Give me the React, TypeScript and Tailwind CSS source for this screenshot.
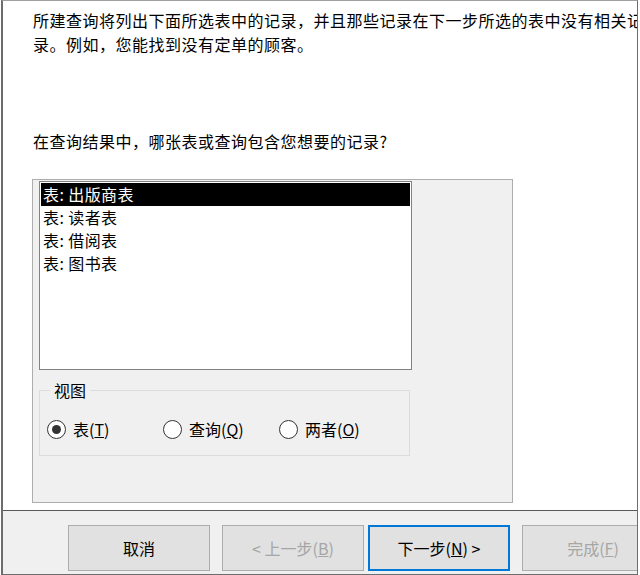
import React from 'react';

const font = { fontFamily: '"Noto Sans CJK SC", "Microsoft YaHei", sans-serif' };

const tables = ['表: 出版商表', '表: 读者表', '表: 借阅表', '表: 图书表'];

function Radio({ checked, label, mnemonic }: { checked?: boolean; label: string; mnemonic: string }) {
  return (
    <div className="flex w-[116px] items-center">
      <span className="flex h-[19px] w-[19px] items-center justify-center rounded-full border border-[#333333] bg-white">
        {checked && <span className="h-[9px] w-[9px] rounded-full bg-[#333333]" />}
      </span>
      <span className="ml-[7px] text-[16px] leading-[20px] text-black">
        {label}(<u>{mnemonic}</u>)
      </span>
    </div>
  );
}

function Button({
  children,
  disabled,
  focused,
}: {
  children: React.ReactNode;
  disabled?: boolean;
  focused?: boolean;
}) {
  return (
    <div
      className={
        'flex h-[46px] w-[142px] shrink-0 items-center justify-center bg-[#e1e1e1] text-[16px] ' +
        (focused ? 'border-2 border-[#0078d7] ' : 'border border-[#adadad] ') +
        (disabled ? 'text-[#a6a6a6]' : 'text-black')
      }
    >
      {children}
    </div>
  );
}

export default function App() {
  return (
    <div className="h-[575px] w-[640px] overflow-hidden bg-white" style={font}>
      <div className="ml-px flex h-[575px] w-[637px] flex-col border-t border-l-2 border-r border-b border-[#6d6d6d] border-t-[#a0a0a0]">
        {/* Upper page */}
        <div className="h-[509px] shrink-0 overflow-hidden bg-white pl-[30px] pt-[7px]">
          <div className="whitespace-nowrap text-[16px] leading-[24px] tracking-[0.5px] text-black">
            <div>所建查询将列出下面所选表中的记录，并且那些记录在下一步所选的表中没有相关记</div>
            <div>录。例如，您能找到没有定单的顾客。</div>
          </div>
          <div className="mt-[73px] text-[16px] leading-[24px] tracking-[0.5px] text-black">
            在查询结果中，哪张表或查询包含您想要的记录?
          </div>

          <div className="ml-[-1px] mt-[26px] h-[324px] w-[481px] border border-[#adadad] bg-[#f0f0f0] pl-[6px] pt-[1px]">
            <div className="h-[189px] w-[373px] border border-[#828282] bg-white p-px">
              {tables.map((t, i) => (
                <div
                  key={t}
                  className={
                    'h-[23px] pl-[2px] text-[16px] leading-[23px] tracking-[0.4px] ' +
                    (i === 0 ? 'bg-black text-white' : 'text-black')
                  }
                >
                  {t}
                </div>
              ))}
            </div>

            <fieldset className="mt-[10px] h-[76px] w-[371px] border border-[#dcdcdc] px-0 pb-0 pt-0">
              <legend className="ml-[10px] px-[4px] text-[16px] leading-[20px] text-black">视图</legend>
              <div className="mt-[19px] flex pl-[7px]">
                <Radio checked label="表" mnemonic="T" />
                <Radio label="查询" mnemonic="Q" />
                <Radio label="两者" mnemonic="O" />
              </div>
            </fieldset>
          </div>
        </div>

        {/* Button bar */}
        <div className="flex flex-1 gap-[12px] overflow-hidden border-t border-[#5a5a5a] bg-[#f0f0f0] pl-[65px] pt-[14px]">
          <Button>取消</Button>
          <div className="flex gap-[4px]">
            <Button disabled>
              &lt; 上一步(<u>B</u>)
            </Button>
            <Button focused>
              下一步(<u>N</u>) &gt;
            </Button>
          </div>
          <Button disabled>
            完成(<u>F</u>)
          </Button>
        </div>
      </div>
    </div>
  );
}
